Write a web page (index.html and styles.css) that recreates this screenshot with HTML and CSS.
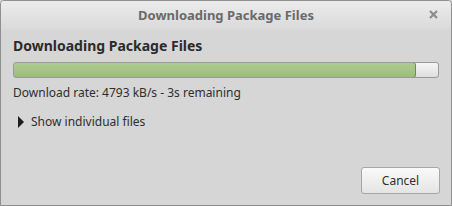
FILE: index.html
```html
<!DOCTYPE html>
<html>
<head>
<meta charset="UTF-8">
<title>Downloading Package Files</title>
<link rel="stylesheet" href="styles.css">
</head>
<body>
<div class="window">
  <div class="titlebar">
    <span class="title">Downloading Package Files</span>
    <svg class="close" width="9" height="9" viewBox="0 0 9 9">
      <path d="M1 1 L8 8 M8 1 L1 8" stroke="#8c8c8c" stroke-width="2.2" stroke-linecap="butt"/>
    </svg>
  </div>
  <div class="content">
    <h3>Downloading Package Files</h3>
    <div class="progress"><div class="fill" style="width: 95%"></div></div>
    <p class="rate">Download rate: 4793 kB/s - 3s remaining</p>
    <div class="expander"><span class="arrow"></span>Show individual files</div>
  </div>
  <div class="buttons">
    <button class="btn">Cancel</button>
  </div>
</div>
</body>
</html>
```

FILE: styles.css
```css
html, body {
	margin: 0;
	padding: 0;
	background: #d6d6d6;
}

.window {
	width: 452px;
	height: 206px;
	box-sizing: border-box;
	border: 1px solid #8f8f8f;
	border-radius: 4px 4px 0 0;
	background: #d6d6d6;
	font-family: "Noto Sans", "DejaVu Sans", sans-serif;
	color: #303030;
	display: flex;
	flex-direction: column;
	overflow: hidden;
}

.titlebar {
	height: 29px;
	background: linear-gradient(#ececec, #d9d9d9);
	display: flex;
	align-items: center;
	justify-content: center;
	position: relative;
}

.title {
	font-size: 13px;
	font-weight: bold;
	color: #6a6a6a;
	margin-top: -1px;
}

.close {
	position: absolute;
	right: 13px;
	top: 9px;
}

.content {
	padding: 6px 12px 0 12px;
	flex: 1;
}

h3 {
	margin: 0;
	font-size: 14px;
	font-weight: bold;
	color: #2b2b2b;
	line-height: 20px;
}

.progress {
	margin-top: 6px;
	height: 16px;
	box-sizing: border-box;
	border: 1px solid #9a9a9a;
	border-radius: 3px;
	background: linear-gradient(#f6f6f6, #dedede);
	width: 426px;
	overflow: hidden;
}

.fill {
	box-sizing: border-box;
	margin: -1px 0 0 -1px;
	height: 16px;
	border: 1px solid #6b8a55;
	border-radius: 3px;
	background: linear-gradient(#b0cc91, #9bbd7a);
}

.rate {
	margin: 7px 0 0 0;
	font-size: 12px;
	line-height: 16px;
	color: #2e2e2e;
}

.expander {
	margin-top: 13px;
	margin-left: 5px;
	font-size: 12px;
	line-height: 16px;
	color: #2e2e2e;
	display: flex;
	align-items: center;
}

.arrow {
	width: 0;
	height: 0;
	border-top: 6px solid transparent;
	border-bottom: 6px solid transparent;
	border-left: 6px solid #1e1e1e;
	margin-right: 7px;
}

.buttons {
	display: flex;
	justify-content: flex-end;
	padding: 0 11px 11px 0;
}

.btn {
	width: 79px;
	height: 27px;
	font-family: "Noto Sans", "DejaVu Sans", sans-serif;
	font-size: 12px;
	color: #2e2e2e;
	border: 1px solid #a6a6a6;
	border-radius: 3px;
	background: linear-gradient(#fafafa, #e4e4e4);
	padding: 0;
}
```
